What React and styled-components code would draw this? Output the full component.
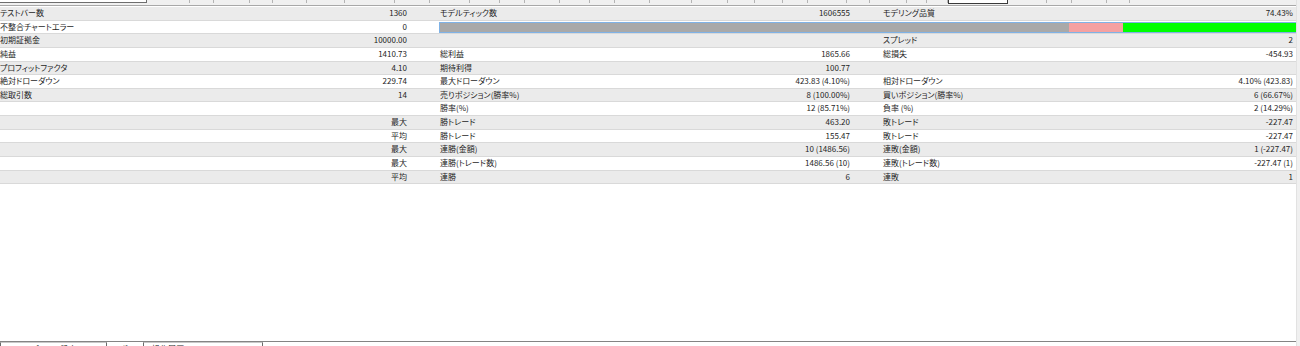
import styled, { createGlobalStyle } from "styled-components";

const GlobalStyle = createGlobalStyle`
  html, body {
    margin: 0;
    padding: 0;
    background: #ffffff;
  }
`;

// x positions of the header separators visible at the very top
const ticks = [147, 190, 214, 250, 273, 307, 345, 395, 430, 470, 500, 525, 560, 590, 615, 650,
  692, 728, 755, 783, 808, 847, 870, 907, 927, 948, 1008, 1047, 1072, 1107, 1130];

const rows = [
  [["テストバー数", "1360"], ["モデルティック数", "1606555"], ["モデリング品質", "74.43%"]],
  "bar",
  [["初期証拠金", "10000.00"], ["", ""], ["スプレッド", "2"]],
  [["純益", "1410.73"], ["総利益", "1865.66"], ["総損失", "-454.93"]],
  [["プロフィットファクタ", "4.10"], ["期待利得", "100.77"], ["", ""]],
  [["絶対ドローダウン", "229.74"], ["最大ドローダウン", "423.83 (4.10%)"], ["相対ドローダウン", "4.10% (423.83)"]],
  [["総取引数", "14"], ["売りポジション(勝率%)", "8 (100.00%)"], ["買いポジション(勝率%)", "6 (66.67%)"]],
  [["", ""], ["勝率(%)", "12 (85.71%)"], ["負率 (%)", "2 (14.29%)"]],
  [["", "最大"], ["勝トレード", "463.20"], ["敗トレード", "-227.47"]],
  [["", "平均"], ["勝トレード", "155.47"], ["敗トレード", "-227.47"]],
  [["", "最大"], ["連勝(金額)", "10 (1486.56)"], ["連敗(金額)", "1 (-227.47)"]],
  [["", "最大"], ["連勝(トレード数)", "1486.56 (10)"], ["連敗(トレード数)", "-227.47 (1)"]],
  [["", "平均"], ["連勝", "6"], ["連敗", "1"]],
];

const App = () => {
  let prev = 0;
  const head = ticks.map((x, i) => {
    const w = x - prev;
    prev = x;
    if (i === 0) return <SearchBox key={i} $w={w} />;
    if (x === 1008) return <ActiveHead key={i} $w={w} />;
    return <HeadCell key={i} $w={w} />;
  });

  return (
    <>
      <GlobalStyle />
      <Window>
        <Main>
          <TopStrip>{head}</TopStrip>
          <Report>
            {rows.map((row, i) =>
              row === "bar" ? (
                <Row key={i} $alt={i % 2 === 1}>
                  <Cell>
                    <Label>不整合チャートエラー</Label>
                    <Value>0</Value>
                  </Cell>
                  <QualityBar>
                    <Segment $color="#a9a9a9" $w="73.5%" />
                    <Segment $color="#f5a1a1" $w="6.3%" />
                    <Segment $color="#00ff00" $w="20.2%" />
                  </QualityBar>
                </Row>
              ) : (
                <Row key={i} $alt={i % 2 === 1}>
                  {row.map(([label, value], j) => (
                    <Cell key={j} $last={j === 2}>
                      <Label>{label}</Label>
                      <Value>{value}</Value>
                    </Cell>
                  ))}
                </Row>
              )
            )}
          </Report>
          <BottomTabs>
            <Tab $w={107}>エキスパートの設定</Tab>
            <PlainTab>レポート</PlainTab>
            <Tab $w={120}>操作履歴</Tab>
          </BottomTabs>
        </Main>
        <ScrollEdge />
      </Window>
    </>
  );
};

export default App;

const Window = styled.div`
  display: flex;
  width: 1300px;
  height: 346px;
  overflow: hidden;
  font-family: "Noto Sans CJK JP", "Noto Sans", sans-serif;
  font-feature-settings: "palt";
  color: #1e1e1e;
`;

const Main = styled.div`
  width: 1296px;
  display: flex;
  flex-direction: column;
`;

const ScrollEdge = styled.div`
  width: 3px;
  background: #f0f0f0;
  border-left: 1px solid #e2e2e2;
`;

const TopStrip = styled.div`
  display: flex;
  align-items: flex-start;
  height: 5px;
  background: #f0f0f0;
  border-bottom: 1px solid #a8a8a8;
`;

const SearchBox = styled.div`
  box-sizing: border-box;
  width: ${(p) => p.$w}px;
  height: 3px;
  background: #ffffff;
  border-right: 1px solid #6e6e6e;
  border-bottom: 1px solid #6e6e6e;
`;

const HeadCell = styled.div`
  box-sizing: border-box;
  width: ${(p) => p.$w}px;
  height: 3px;
  border-right: 1px solid #b4b4b4;
`;

const ActiveHead = styled.div`
  box-sizing: border-box;
  width: ${(p) => p.$w}px;
  height: 4px;
  background: #ffffff;
  border: 1px solid #3a3a3a;
  border-top: none;
`;

const Report = styled.div`
  padding-top: 1px;
`;

const Row = styled.div`
  box-sizing: border-box;
  display: grid;
  grid-template-columns: 440px 443px 1fr;
  height: 13.65px;
  background: ${(p) => (p.$alt ? "#ffffff" : "#ebebeb")};
  border-bottom: 1px solid #d9d9d9;
  font-size: 8px;
  line-height: 12.65px;
`;

const Cell = styled.div`
  display: flex;
  justify-content: space-between;
  padding-right: ${(p) => (p.$last ? "3px" : "33px")};
  white-space: nowrap;
`;

const Label = styled.span``;

const Value = styled.span``;

const QualityBar = styled.div`
  grid-column: 2 / 4;
  display: flex;
  box-sizing: border-box;
  margin: 1px 0 0 -1px;
  height: 11px;
  border: 1px solid #7fb2e6;
  border-right: none;
`;

const Segment = styled.div`
  width: ${(p) => p.$w};
  background: ${(p) => p.$color};
`;

const BottomTabs = styled.div`
  margin-top: auto;
  display: flex;
  align-items: flex-start;
  height: 4px;
  overflow: hidden;
  border-top: 1px solid #848484;
  background: #ffffff;
  font-size: 8px;
  line-height: 10px;
`;

const Tab = styled.div`
  box-sizing: border-box;
  width: ${(p) => p.$w}px;
  height: 14px;
  padding: 1px 0 0 8px;
  border: 1px solid #6b6b6b;
  border-top: 1px solid #c8c8c8;
  white-space: nowrap;
`;

const PlainTab = styled.div`
  width: 36px;
  padding: 2px 0 0 6px;
  box-sizing: border-box;
  white-space: nowrap;
`;
